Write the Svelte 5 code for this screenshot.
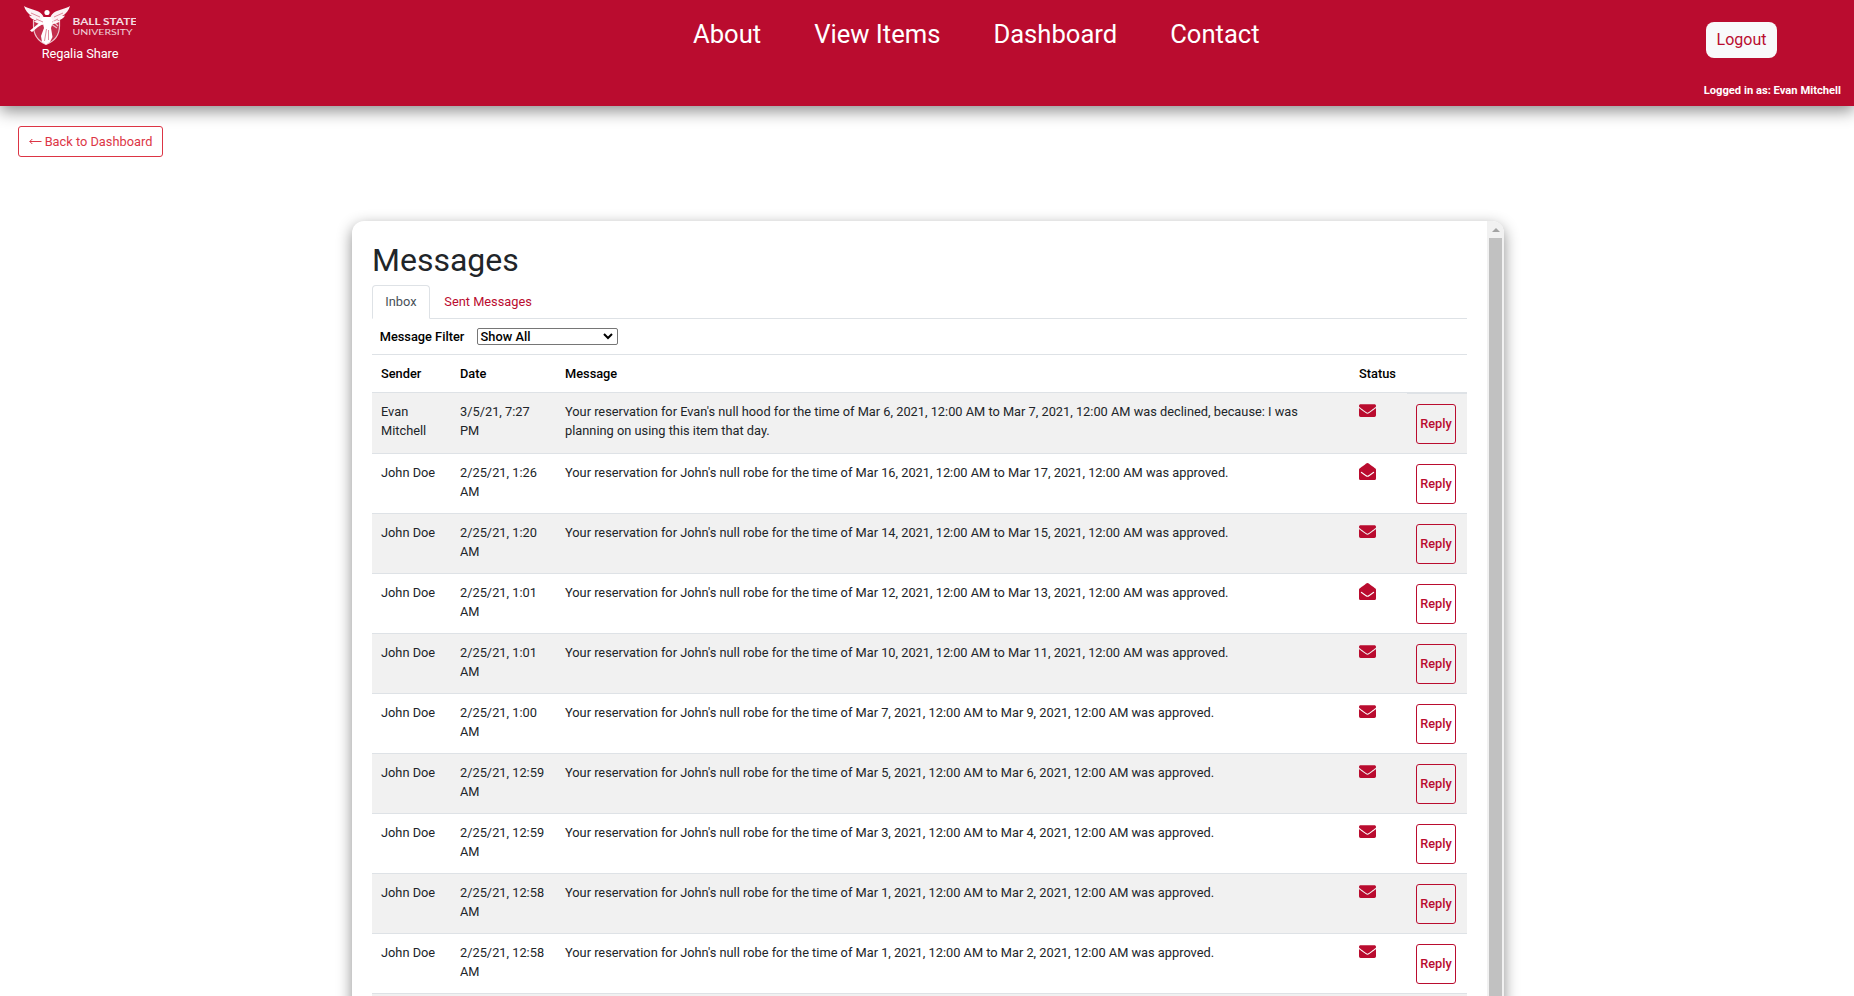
<script>
  const nav = ['About', 'View Items', 'Dashboard', 'Contact'];

  const approved = (from, to) =>
    `Your reservation for John's null robe for the time of Mar ${from}, 2021, 12:00 AM to Mar ${to}, 2021, 12:00 AM was approved.`;

  const messages = [
    {
      sender: 'Evan Mitchell',
      date: '3/5/21, 7:27 PM',
      text: "Your reservation for Evan's null hood for the time of Mar 6, 2021, 12:00 AM to Mar 7, 2021, 12:00 AM was declined, because: I was planning on using this item that day."
    },
    { sender: 'John Doe', date: '2/25/21, 1:26 AM', text: approved(16, 17), open: true },
    { sender: 'John Doe', date: '2/25/21, 1:20 AM', text: approved(14, 15) },
    { sender: 'John Doe', date: '2/25/21, 1:01 AM', text: approved(12, 13), open: true },
    { sender: 'John Doe', date: '2/25/21, 1:01 AM', text: approved(10, 11) },
    { sender: 'John Doe', date: '2/25/21, 1:00 AM', text: approved(7, 9) },
    { sender: 'John Doe', date: '2/25/21, 12:59 AM', text: approved(5, 6) },
    { sender: 'John Doe', date: '2/25/21, 12:59 AM', text: approved(3, 4) },
    { sender: 'John Doe', date: '2/25/21, 12:58 AM', text: approved(1, 2) },
    { sender: 'John Doe', date: '2/25/21, 12:58 AM', text: approved(1, 2) }
  ];
</script>

<div class="page">
  <header>
    <div class="brand">
      <svg class="logo" width="112" height="40" viewBox="0 0 112 40">
        <path d="M9.5 14V20C9.5 28 14 35 22 38.5C31 35 35.5 28 35.5 20V14" fill="#fff" fill-opacity=".14" stroke="#fff" stroke-opacity=".75" stroke-width="1.2" />
        <g fill="#fff">
          <path d="M0 0C4 3 12 3.500 16 6.500C19 9 20 11 20 14L19 19C16 17 12 18 10 15L13 15C9 14 6 12 5 9.500L8 10C4 8 1 4 0 0Z" opacity=".95" />
          <path d="M46 0C42 3 34 3.500 30 6.500C27 9 26 11 26 14L27 19C30 17 34 18 36 15L33 15C37 14 40 12 41 9.500L38 10C42 8 45 4 46 0Z" opacity=".95" />
          <circle cx="23" cy="6.500" r="2.600" />
          <path d="M19 11L27 11L29 16L27 22L28.500 31L26 36L22 38.500L18 36L17 30L20 22L19 18L14 21L8 26L6 24.500L14 18Z" />
        </g>
        <path d="M20.500 35L22.500 23M24.500 34L24.500 24M12 13L19 16M34 13L28 16M7 7L16 11M39 7L30 11" fill="none" stroke="#ba0c2f" stroke-width=".7" opacity=".65" />
        <path d="M28 14L34 20M27 18L33 22" fill="none" stroke="#fff" stroke-width="1.300" opacity=".7" />
        <text x="48.5" y="19" class="name" textLength="64.5" lengthAdjust="spacingAndGlyphs">BALL STATE</text>
        <text x="48.5" y="28.6" class="sub" textLength="60" lengthAdjust="spacingAndGlyphs">UNIVERSITY</text>
      </svg>
      <span>Regalia Share</span>
    </div>
    <nav>
      {#each nav as item}<a href="#top">{item}</a>{/each}
    </nav>
    <div class="account">
      <button class="logout">Logout</button>
      <strong>Logged in as: Evan Mitchell</strong>
    </div>
  </header>

  <button class="back"><svg width="13" height="9" viewBox="0 0 13 9"><path d="M.8 4.5H12.5M3.3 2L.8 4.5L3.3 7" fill="none" stroke="currentColor" /></svg>Back to Dashboard</button>

  <main>
    <section>
      <h1>Messages</h1>
      <div class="tabs">
        <span class="tab active">Inbox</span>
        <span class="tab">Sent Messages</span>
      </div>
      <div class="filter">
        <span>Message Filter</span>
        <div class="select">
          <span>Show All</span>
          <svg width="10" height="7" viewBox="0 0 10 7"><path d="M1 1L5 5L9 1" fill="none" stroke="#000" stroke-width="2" /></svg>
        </div>
      </div>
      <table>
        <colgroup><col class="c1" /><col class="c2" /><col /><col class="c4" /><col class="c5" /></colgroup>
        <thead>
          <tr><th>Sender</th><th>Date</th><th>Message</th><th>Status</th><th></th></tr>
        </thead>
        <tbody>
          {#each messages as m}
            <tr>
              <td>{m.sender}</td>
              <td>{m.date}</td>
              <td>{m.text}</td>
              <td class="status">
                {#if m.open}
                  <svg width="17" height="17" viewBox="0 0 512 512"><path fill="#ba0c2f" d="M512 464c0 26.51-21.49 48-48 48H48c-26.51 0-48-21.49-48-48V200.724a48 48 0 0 1 18.387-37.776c24.913-19.529 45.501-35.365 164.2-121.511C199.412 29.17 232.797-.347 256 .003c23.198-.354 56.596 29.172 73.413 41.433 118.687 86.137 139.303 101.995 164.2 121.512A48 48 0 0 1 512 200.724V464zm-65.666-196.605c-2.563-3.728-7.7-4.595-11.339-1.907-22.845 16.873-55.462 40.705-105.582 77.079-16.825 12.266-50.21 41.781-73.413 41.43-23.211.344-56.559-29.143-73.413-41.43-50.114-36.37-82.734-60.204-105.582-77.079-3.639-2.688-8.776-1.821-11.339 1.907l-9.072 13.196a7.998 7.998 0 0 0 1.839 10.967c22.887 16.899 55.454 40.69 105.303 76.868 20.274 14.781 56.524 47.813 92.264 47.573 35.724.242 71.961-32.771 92.263-47.573 49.85-36.179 82.418-59.97 105.303-76.868a7.998 7.998 0 0 0 1.839-10.967l-9.071-13.196z" /></svg>
                {:else}
                  <svg width="17" height="17" viewBox="0 0 512 512"><path fill="#ba0c2f" d="M502.3 190.8c3.9-3.1 9.7-.2 9.7 4.7V400c0 26.5-21.5 48-48 48H48c-26.5 0-48-21.5-48-48V195.6c0-5 5.7-7.8 9.7-4.7 22.4 17.4 52.1 39.5 154.1 113.6 21.1 15.4 56.7 47.8 92.2 47.6 35.7.3 72-32.8 92.3-47.6 102-74.1 131.6-96.3 154-113.7zM256 320c23.2.4 56.6-29.2 73.4-41.4 132.7-96.3 142.8-104.7 173.4-128.7 5.8-4.5 9.2-11.5 9.2-18.9v-19c0-26.5-21.5-48-48-48H48c-26.5 0-48 21.5-48 48v19c0 7.4 3.4 14.3 9.2 18.9 30.6 23.9 40.7 32.4 173.4 128.7 16.8 12.2 50.2 41.8 73.4 41.4z" /></svg>
                {/if}
              </td>
              <td class="action"><button>Reply</button></td>
            </tr>
          {/each}
          <tr><td colspan="5"></td></tr>
        </tbody>
      </table>
    </section>
    <div class="scroll">
      <i class="up"></i>
      <div class="thumb"></div>
    </div>
  </main>
</div>

<style>
  :global(body) { margin: 0; overflow: hidden; background: #fff; }
  .page {
    height: 996px; overflow: hidden; display: flex; flex-direction: column;
    font-family: Roboto, sans-serif; font-size: 12.8px; line-height: 19.2px; color: #212529;
  }
  * { box-sizing: border-box; }
  button { font-family: inherit; margin: 0; }
  header {
    height: 106px; flex: none; background: #ba0c2f; color: #fff;
    display: grid; grid-template-columns: 160px 1fr 194px;
    box-shadow: 0 5px 15px rgba(0, 0, 0, .45);
  }
  .brand { display: flex; flex-direction: column; align-items: center; padding-top: 6px; }
  .logo { display: block; }
  .brand span { margin-top: -2px; letter-spacing: -.08px; }
  .name { font: 700 9.5px Lato, sans-serif; fill: #fff; opacity: .85; }
  .sub { font: 400 8px Lato, sans-serif; fill: #fff; opacity: .8; }
  nav { display: flex; gap: 53px; padding: 15px 0 0 533px; }
  nav a { color: #fff; text-decoration: none; font-size: 25.6px; line-height: 38px; white-space: nowrap; }
  .account { display: flex; flex-direction: column; padding-top: 22px; }
  .logout {
    width: 71px; height: 36px; margin-left: 46px; padding: 0 0 2px; border: 0; border-radius: 8px;
    background: #f8f9fa; color: #ba0c2f; font-size: 16px;
  }
  .account strong { margin: 23px 13px 0 0; font-size: 11.2px; line-height: 20px; text-align: right; white-space: nowrap; }
  .back {
    flex: none; width: 145px; height: 31px; margin: 20px 0 0 18px; padding: 0;
    display: flex; align-items: center; justify-content: center; gap: 3px;
    background: #fff; color: #dc3545; border: 1px solid #dc3545; border-radius: 3px; font-size: 12.8px;
  }
  main {
    flex: none; width: 1152px; height: 900px; margin: 64px 0 0 352px; display: flex; overflow: hidden;
    border-radius: 12px 12px 0 0; background: #fff; box-shadow: 0 5px 15px rgba(0, 0, 0, .45);
  }
  section { flex: 1; padding: 20px 20px 0; }
  h1 { margin: 0; font-size: 32px; font-weight: 400; line-height: 38px; height: 44px; }
  .tabs { display: flex; height: 34px; border-bottom: 1px solid #dee2e6; }
  .tab { height: 34px; padding: 6px 13px 0; border: 1px solid transparent; color: #ba0c2f; }
  .active { padding: 6px 12.8px 0 12.3px; color: #495057; background: #fff; border-color: #dee2e6 #dee2e6 #fff; border-radius: 4px 4px 0 0; }
  .filter { height: 35px; display: flex; align-items: center; padding-left: 7.7px; gap: 12.3px; color: #000; font-weight: 500; }
  .select {
    width: 141px; height: 17px; padding: 0 4px 0 3px; border: 1px solid #767676; border-radius: 2px;
    display: flex; align-items: center; justify-content: space-between; line-height: 15px;
  }
  table { width: 100%; border-collapse: separate; border-spacing: 0; table-layout: fixed; }
  .c1 { width: 79px; } .c2 { width: 105px; } .c4 { width: 57px; } .c5 { width: 60px; }
  th { height: 38px; padding: 0 9px; border-top: 1px solid #dee2e6; color: #000; font-weight: 500; text-align: left; }
  td { height: 60px; padding: 9px 9px 0; border-top: 1px solid #dee2e6; vertical-align: top; }
  tbody tr:first-child td { height: 61px; }
  tbody tr:nth-child(odd) { background: #f1f1f1; }
  td.status svg { display: block; }
  td.action { padding-top: 10px; }
  tbody tr:first-child td.action { border-top-width: 2px; }
  td.action button {
    display: block; width: 40px; height: 40px; padding: 0 0 1px; background: transparent;
    color: #ba0c2f; border: 1px solid #ba0c2f; border-radius: 3px; font-size: 12.8px; font-weight: 500;
  }
  .scroll { width: 17px; background: #f1f1f1; display: flex; flex-direction: column; align-items: center; }
  .up { height: 11px; border: solid transparent; border-width: 0 4px 4px; border-bottom-color: #a3a3a3; }
  .thumb { width: 13px; flex: 1; margin-top: 6px; background: #c1c1c1; }
</style>
